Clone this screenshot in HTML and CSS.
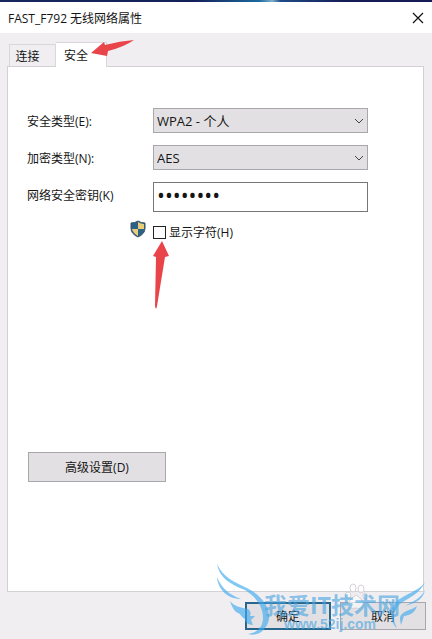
FILE: index.html
```
<!DOCTYPE html>
<html lang="zh-CN">
<head>
    <meta charset="UTF-8">
    <meta name="viewport" content="width=device-width, initial-scale=1.0">
    <link rel="stylesheet" href="styles.css">
    <title>FAST_F792 无线网络属性</title>
</head>
<body>
    <div class="titlebar">
        <h1>FAST_F792 无线网络属性</h1>
        <button type="button" class="close" aria-label="关闭">
            <svg width="12" height="12" viewBox="0 0 12 12"><path d="M1 1 L11 11 M11 1 L1 11" stroke="#111" stroke-width="1.2"/></svg>
        </button>
    </div>

    <div class="tabs">
        <button type="button" class="tab">连接</button>
        <button type="button" class="tab active">安全
            <svg class="arrow-tab" width="46" height="20" viewBox="0 0 46 20"><path d="M1 14 L14 3 L15 6 Q30 2 44 1 Q34 8 18 12 L17 17 Z" fill="#e8444a"/></svg>
        </button>
    </div>

    <form class="panel">
        <div class="row">
            <label for="security">安全类型(E):</label>
            <div class="select">
                <select id="security"><option>WPA2 - 个人</option></select>
                <svg class="chevron" width="10" height="6" viewBox="0 0 10 6"><path d="M1 1 L5 5 L9 1" fill="none" stroke="#444"/></svg>
            </div>
        </div>
        <div class="row">
            <label for="encryption">加密类型(N):</label>
            <div class="select">
                <select id="encryption"><option>AES</option></select>
                <svg class="chevron" width="10" height="6" viewBox="0 0 10 6"><path d="M1 1 L5 5 L9 1" fill="none" stroke="#444"/></svg>
            </div>
        </div>
        <div class="row key-row">
            <label for="key">网络安全密钥(K)</label>
            <input type="password" id="key" value="12345678">
        </div>
        <div class="show">
            <svg class="shield" width="16" height="18" viewBox="0 0 16 18">
                <path d="M8 1 Q11 3 15 3 V8 Q15 14 8 17 Q1 14 1 8 V3 Q5 3 8 1 Z" fill="#2b6387"/>
                <path d="M8 2 Q11 4 14 4 V9 H8 Z M8 9 V16 Q3 13 2 9 Z" fill="#e9cd79"/>
                <path d="M8 1 Q11 3 15 3 V8 Q15 14 8 17 Q1 14 1 8 V3 Q5 3 8 1 Z" fill="none" stroke="#3c5465"/>
            </svg>
            <input type="checkbox" id="show">
            <label for="show">显示字符(H)</label>
            <svg class="arrow-check" width="18" height="70" viewBox="0 0 18 70"><path d="M10 1 L1 16 L4 17 L3 66 Q4 71 5 66 L13 17 L17 16 Z" fill="#e8444a"/></svg>
        </div>
        <button type="button" class="advanced">高级设置(D)</button>
    </form>

    <div class="footer">
        <button type="button" class="ok">确定</button>
        <button type="button" class="cancel">取消</button>

        <!-- site watermark -->
        <div class="watermark">
            <svg class="wing" width="56" height="76" viewBox="0 0 56 76">
                <path d="M1 1 C7 14 18 19 31 25 C47 33 54 45 53 56 C51 67 42 74 32 71 C41 70 47 64 47 55 C47 43 40 34 29 27 C13 21 3 14 1 1 Z"/>
                <path d="M1 14 C6 26 14 32 25 36 C12 36 2 27 1 14 Z"/>
                <path d="M14 38 C18 43 25 45 32 46 C35 48 35 51 34 53 L39 53 L35 57 L37 62 C32 62 29 59 29 56 C25 54 25 51 22 50 C18 48 16 44 14 38 Z"/>
            </svg>
            <svg class="paw" width="24" height="28" viewBox="0 0 24 28">
                <ellipse cx="9" cy="5" rx="3" ry="4"/><ellipse cx="17" cy="6" rx="3" ry="4"/>
                <ellipse cx="4" cy="12" rx="3" ry="3"/><ellipse cx="21" cy="13" rx="2" ry="3"/>
                <path d="M12 12 Q18 15 20 21 Q18 27 12 25 Q5 27 4 21 Q6 15 12 12 Z"/>
            </svg>
            <div class="site">我爱IT技术网</div>
            <div class="url">www.52ij.com</div>
            <svg class="tail" width="36" height="50" viewBox="0 0 36 50">
                <path d="M35 1 C30 13 18 17 10 23 C3 29 2 38 7 47 C0 42 -1 28 6 21 C14 13 28 11 35 1 Z"/>
                <path d="M35 9 C33 19 25 22 15 25 C24 20 31 17 35 9 Z M27 25 C24 34 18 34 14 35 L11 44 C10 38 9 36 12 33 C16 29 22 29 27 25 Z"/>
            </svg>
        </div>
    </div>
</body>
</html>
```
FILE: styles.css
```
* {
    box-sizing: border-box;
    margin: 0;
    padding: 0;
}

body, button, select, input {
    font-family: "Open Sans", "Noto Sans CJK SC", sans-serif;
    font-size: 12px;
    color: #151515;
}

body {
    display: flex;
    flex-direction: column;
    min-height: 100vh;
    background: #f0eef1;
    overflow-x: hidden;
}

.titlebar {
    display: flex;
    justify-content: space-between;
    align-items: center;
    height: 33px;
    padding: 2px 8px 0;
    background: linear-gradient(90deg, #17275f, #14205a 45%, #1c6a9e 60%, #7fb0cc 63%, #1d4a85 65%, #151c56 80%) top / 100% 2px no-repeat #fff;
}

.titlebar h1 {
    font-size: 12px;
    font-weight: normal;
}

.close {
    display: flex;
    border: none;
    background: none;
}

.tabs {
    display: flex;
    align-items: flex-end;
    height: 33px;
    padding-left: 9px;
}

.tab {
    position: relative;
    width: 47px;
    height: 22px;
    padding-right: 10px;
    border: 1px solid #d9d7dc;
    border-bottom: none;
    background: #f0eef1;
}

.tab.active {
    z-index: 1;
    width: 51px;
    height: 25px;
    margin-bottom: -1px;
    background: #fff;
    border-left: none;
}

.arrow-tab {
    position: absolute;
    left: 34px;
    top: -4px;
}

.panel {
    flex: 1;
    margin: 0 8px 0 7px;
    padding: 41px 55px 16px 19px;
    border: 1px solid #d3d1d6;
    background: #fff;
}

.row {
    display: flex;
    align-items: center;
    margin-bottom: 12px;
}

.row > label {
    width: 126px;
}

.row.key-row {
    align-items: flex-start;
    margin-bottom: 8px;
}

.key-row > label {
    padding-top: 4px;
}

.select {
    position: relative;
    flex: 1;
}

select {
    display: block;
    appearance: none;
    width: 100%;
    height: 25px;
    padding: 0 3px;
    border: 1px solid #a9a7ab;
    border-radius: 0;
    background: #e2e0e3;
    font-size: 13px;
}

.chevron {
    position: absolute;
    right: 4px;
    top: 10px;
}

#key {
    flex: 1;
    min-width: 0;
    height: 30px;
    padding: 0 3px 5px;
    border: 1px solid #77757a;
    background: #fff;
    font-size: 21px;
}

.show {
    position: relative;
    display: flex;
    align-items: center;
    margin-left: 103px;
}

.shield {
    margin: 0 7px 6px 0;
}

#show {
    appearance: none;
    width: 13px;
    height: 13px;
    margin-right: 3px;
    border: 1px solid #222;
    background: #fff;
}

.arrow-check {
    position: absolute;
    left: 22px;
    top: 20px;
}

.advanced, .ok, .cancel {
    border: 1px solid #a9a7ab;
    background: #e2e0e3;
}

.advanced {
    display: block;
    width: 138px;
    height: 30px;
    margin-top: 208px;
    margin-left: 1px;
}

.footer {
    position: relative;
    display: flex;
    justify-content: flex-end;
    gap: 9px;
    padding: 10px 6px 9px;
}

.ok, .cancel {
    width: 86px;
    height: 28px;
}

.ok {
    border: 2px solid #28678d;
}

/* watermark */
.watermark {
    position: absolute;
    right: 6px;
    bottom: 0;
    width: 210px;
    height: 76px;
    color: rgba(75, 165, 225, 0.65);
    fill: rgba(65, 170, 240, 0.65);
    pointer-events: none;
}

.wing, .tail, .paw, .site, .url {
    position: absolute;
}

.wing {
    left: 0;
    top: 0;
}

.site {
    left: 48px;
    top: 28px;
    font-size: 23px;
    font-weight: bold;
    line-height: 28px;
    white-space: nowrap;
}

.url {
    left: 68px;
    top: 52px;
    font-family: "Liberation Sans", sans-serif;
    font-size: 14px;
    font-weight: bold;
    line-height: 18px;
}

.tail {
    right: 0;
    top: 18px;
}

.paw {
    left: 128px;
    top: 20px;
    fill: rgba(255, 255, 255, 0.6);
    stroke: #d3d1d4;
}
```
